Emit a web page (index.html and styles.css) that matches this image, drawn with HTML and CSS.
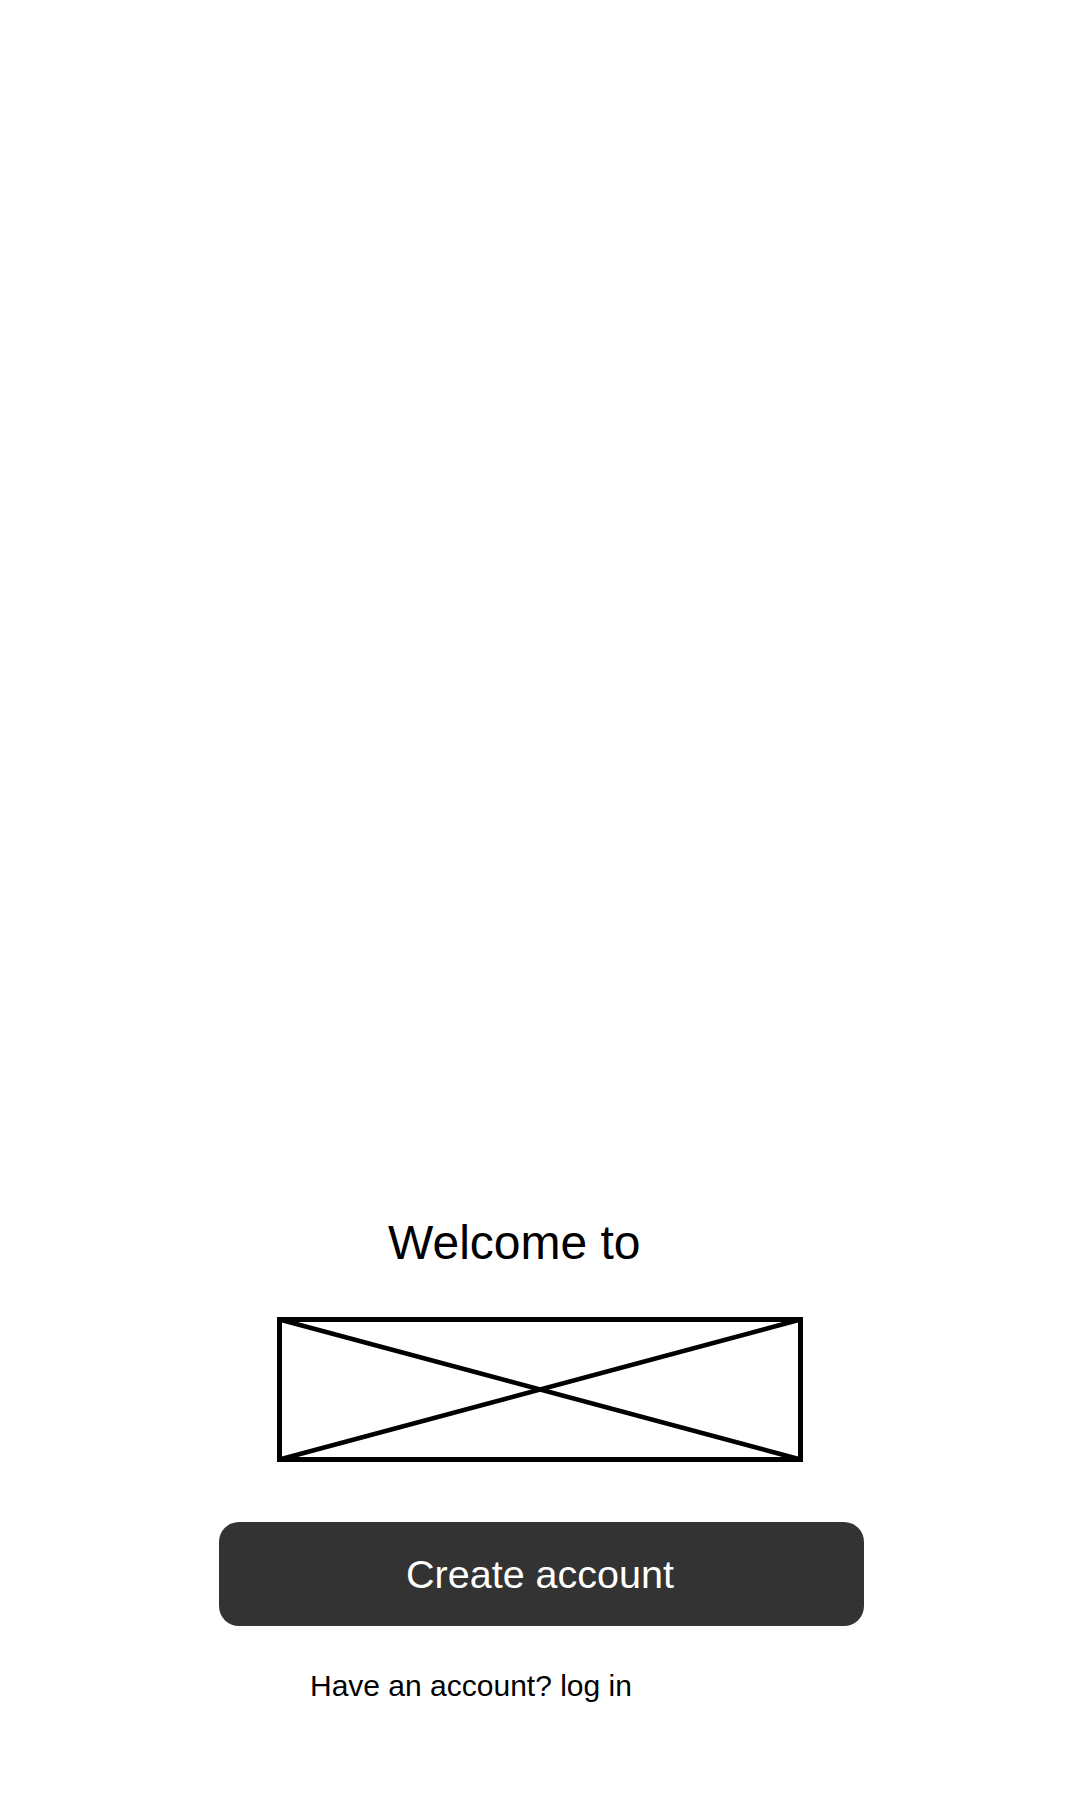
FILE: index.html
```html
<!DOCTYPE html>
<html>
<head>
<meta charset="utf-8">
<link rel="stylesheet" href="styles.css">
</head>
<body>
<main class="page">
  <h1 class="welcome">Welcome to</h1>
  <div class="logo">
    <svg width="526" height="145" viewBox="0 0 526 145">
      <rect x="2.5" y="2.5" width="521" height="140" fill="none" stroke="#000" stroke-width="5"/>
      <line x1="2.5" y1="2.5" x2="523.5" y2="142.5" stroke="#000" stroke-width="4.5"/>
      <line x1="2.5" y1="142.5" x2="523.5" y2="2.5" stroke="#000" stroke-width="4.5"/>
    </svg>
  </div>
  <button class="create">Create account</button>
  <p class="login">Have an account? log in</p>
</main>
</body>
</html>
```
FILE: styles.css
```css
html, body {
  margin: 0;
  padding: 0;
  background: #fff;
}
.page {
  width: 1080px;
  height: 1800px;
  box-sizing: border-box;
  display: flex;
  flex-direction: column;
  justify-content: flex-end;
  padding-bottom: 97px;
  font-family: "Liberation Sans", Arial, sans-serif;
  color: #000;
}
.welcome {
  margin: 0 0 46px 388px;
  font-size: 48px;
  line-height: 56px;
  font-weight: normal;
}
.logo {
  margin-left: 277px;
  width: 526px;
  height: 145px;
  display: flex;
}
.create {
  margin: 60px 0 0 219px;
  width: 645px;
  height: 104px;
  border: none;
  border-radius: 20px;
  background: #333333;
  color: #fff;
  font-family: "Liberation Sans", Arial, sans-serif;
  font-size: 39.5px;
  display: flex;
  align-items: center;
  justify-content: center;
  padding: 0 3px 0 0;
}
.login {
  margin: 43px 0 0 310px;
  font-size: 30px;
  line-height: 34px;
}
```
